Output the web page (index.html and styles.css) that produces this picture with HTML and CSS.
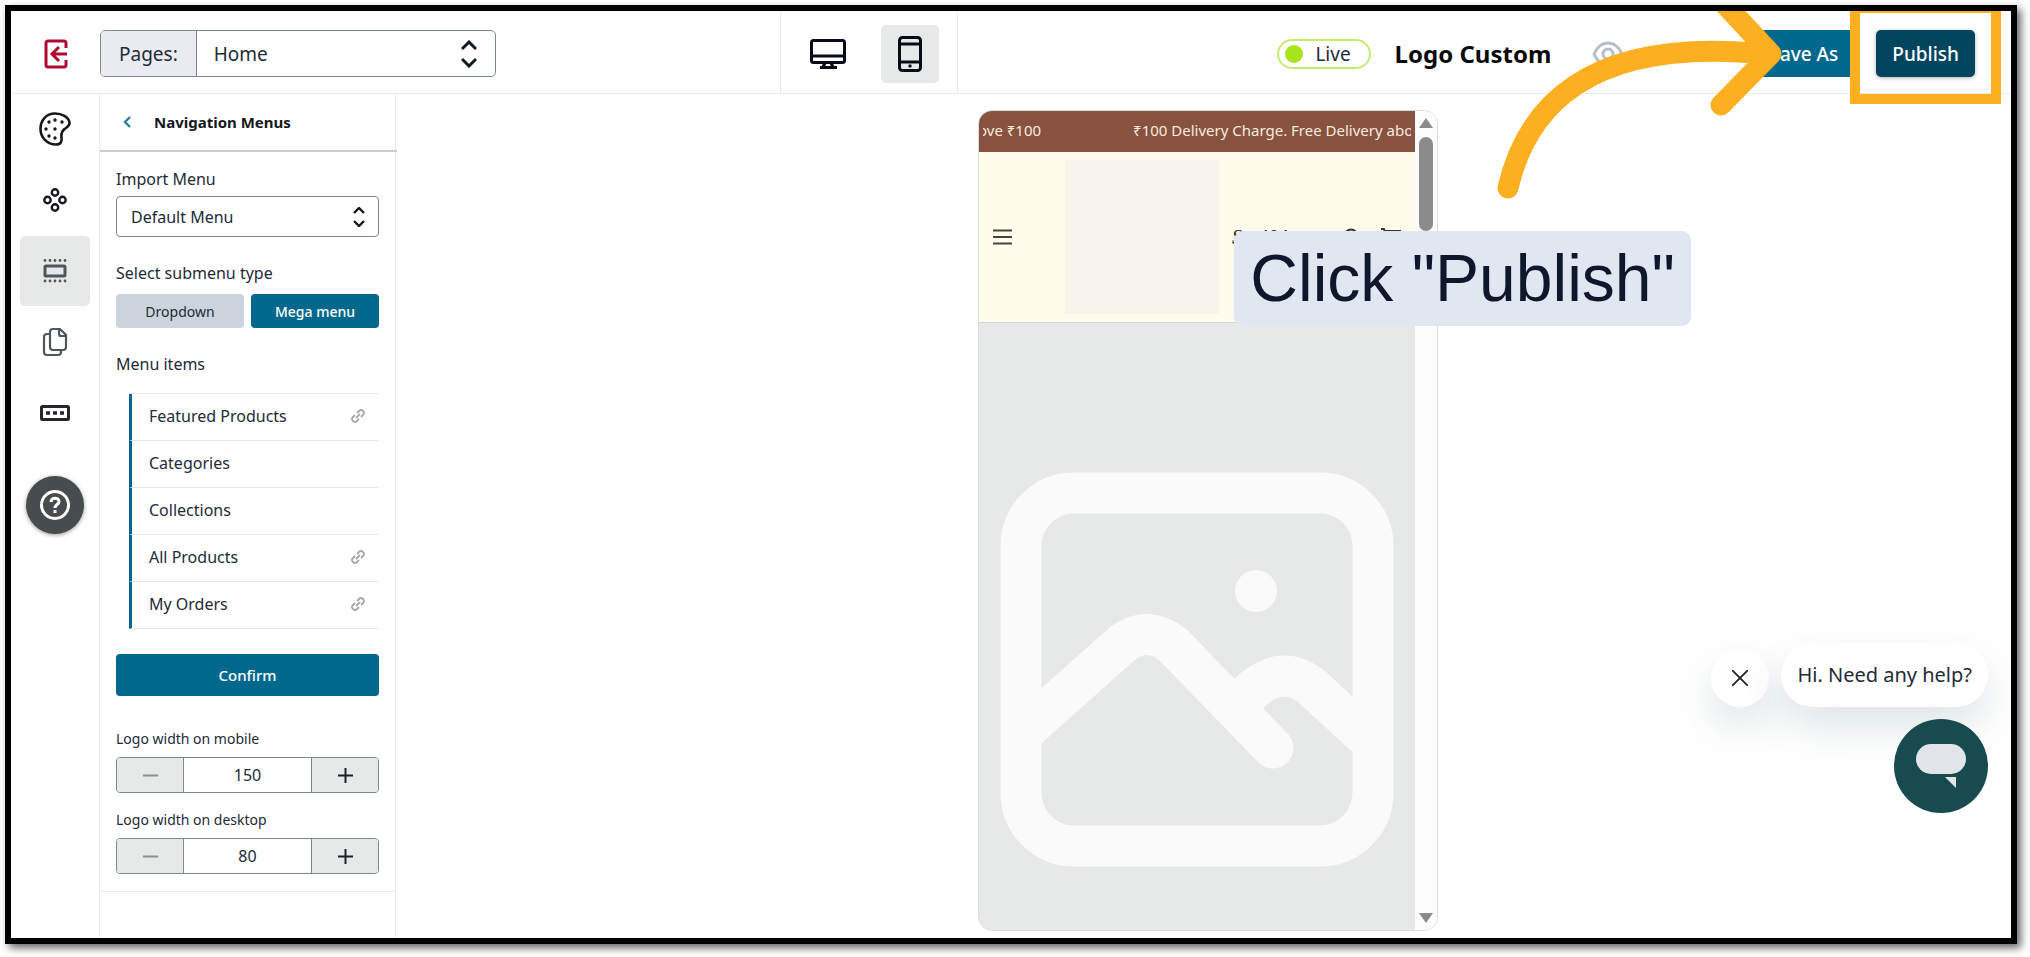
FILE: index.html
```
<!DOCTYPE html>
<html lang="en">
<head>
	<meta charset="utf-8">
	<title>Website Builder</title>
	<meta name="viewport" content="width=device-width, initial-scale=1">
	<link rel="stylesheet" href="styles.css">
</head>
<body>
	<div class="frame">
		<header class="topbar">
			<div class="topbar-left">
				<button class="exit" type="button" aria-label="Exit">
					<svg width="24" height="30" viewBox="0 0 24 30" fill="none" stroke="#b0082f" stroke-width="3"><path d="M22 9V4a2 2 0 0 0-2-2H4a2 2 0 0 0-2 2v22a2 2 0 0 0 2 2h16a2 2 0 0 0 2-2v-5M23 15H9M15 8l-7 7 7 7"/></svg>
				</button>
				<div class="pages">
					<label class="pages-label" for="page">Pages:</label>
					<div class="select-wrap">
						<select class="pages-select" id="page"><option>Home</option></select>
						<svg class="updown" width="16" height="28" viewBox="0 0 16 28" fill="none" stroke="#111820" stroke-width="3"><path d="M1 9l7-7 7 7M1 19l7 7 7-7"/></svg>
					</div>
				</div>
			</div>
			<div class="devices">
				<button class="device" type="button" aria-label="Desktop">
					<svg width="36" height="30" viewBox="0 0 36 30" fill="none" stroke="#080c18" stroke-width="3"><rect x="1.5" y="1.5" width="33" height="22" rx="2"/><path d="M2 17h32M15 24l-2 4M21 24l2 4M10 28.5h17"/></svg>
				</button>
				<button class="device active" type="button" aria-label="Mobile">
					<svg width="24" height="36" viewBox="0 0 24 36" fill="none" stroke="#080c18" stroke-width="3"><rect x="1.5" y="1.5" width="21" height="33" rx="3"/><path d="M2 8h20M2 26h20"/><circle cx="12" cy="30" r="1" stroke-width="1.5"/></svg>
				</button>
			</div>
			<div class="topbar-right">
				<span class="live"><span class="live-dot"></span>Live</span>
				<h1 class="theme-name">Logo Custom</h1>
				<button class="preview-btn" type="button">
					<svg width="32" height="26" viewBox="0 0 32 26" fill="none" stroke="#b6bec9" stroke-width="3"><path d="M2 13C5 6 10 2 16 2s11 4 14 11c-3 7-8 11-14 11S5 20 2 13z"/><circle cx="16" cy="13" r="5"/></svg>
					Preview
				</button>
				<button class="btn save" type="button">Save As</button>
				<button class="btn publish" type="button">Publish</button>
			</div>
		</header>

		<div class="workspace">
			<nav class="rail">
				<button class="rail-item" type="button" aria-label="Theme">
					<svg width="32" height="34" viewBox="0 0 32 34" fill="none" stroke="#16181b" stroke-width="2.6"><path d="M16 1.5C7 1.5 1.500 8.500 1.500 17S8 32.500 17 32.500c5 0 6-3 5.500-7-.5-4 0-6 3-8.500 3-2 5.500-3 5-6.500C29.500 5 23 1.500 16 1.500z"/><path stroke-width="3.4" stroke-linecap="round" d="M16 8h.01M23 10h.01M10 10h.01M7 17h.01M16 17h.01M10 24h.01M16 26h.01"/></svg>
				</button>
				<button class="rail-item" type="button" aria-label="Widgets">
					<svg width="24" height="24" viewBox="0 0 24 24" fill="none" stroke="#16181b" stroke-width="2.4"><circle cx="12" cy="4.500" r="3.2"/><circle cx="4.500" cy="12" r="3.2"/><circle cx="19.500" cy="12" r="3.2"/><circle cx="12" cy="19.500" r="3.2"/></svg>
				</button>
				<button class="rail-item active" type="button" aria-label="Sections">
					<svg width="24" height="24" viewBox="0 0 24 24" fill="none" stroke="#4f5858"><rect x="2" y="7" width="20" height="10" rx="1" stroke-width="3"/><path stroke-width="2.8" stroke-linecap="round" stroke-dasharray="0 5" d="M2 1.500h21M2 22h21"/></svg>
				</button>
				<button class="rail-item" type="button" aria-label="Pages">
					<svg width="26" height="30" viewBox="0 0 26 30" fill="none" stroke="#4f5858" stroke-width="2.2"><path d="M11 2h7l6 6v12a3 3 0 0 1-3 3H11a3 3 0 0 1-3-3V5a3 3 0 0 1 3-3zM17 2v5a2 2 0 0 0 2 2h5M8 7H5a3 3 0 0 0-3 3v15a3 3 0 0 0 3 3h11a3 3 0 0 0 3-3v-2"/></svg>
				</button>
				<button class="rail-item" type="button" aria-label="Footer">
					<svg width="30" height="16" viewBox="0 0 30 16" fill="none" stroke="#24282e"><rect x="1.500" y="1.500" width="27" height="13" rx="1" stroke-width="3"/><path stroke-width="3.5" d="M6 8h4M13 8h4M20 8h4"/></svg>
				</button>
				<button class="help" type="button" aria-label="Help">
					<svg width="30" height="30" viewBox="0 0 30 30" fill="none" stroke="#fff" stroke-width="3"><circle cx="15" cy="15" r="13.500"/><path d="M11 12c0-5 8-5 8-.5 0 3-4 3-4 6.500M15 20v3"/></svg>
				</button>
			</nav>

			<aside class="panel">
				<div class="panel-head">
					<button class="back" type="button" aria-label="Back">
						<svg width="8" height="12" viewBox="0 0 8 12" fill="none" stroke="#2a7f9c" stroke-width="2.4"><path d="M7 1L2 6l5 5"/></svg>
					</button>
					<h2 class="panel-title">Navigation Menus</h2>
				</div>
				<div class="panel-body">
					<label class="label" for="menu">Import Menu</label>
					<div class="select-wrap">
						<select class="menu-select" id="menu"><option>Default Menu</option></select>
						<svg class="updown" width="12" height="20" viewBox="0 0 12 20" fill="none" stroke="#16181b" stroke-width="2.4"><path d="M1 6l5-5 5 5M1 14l5 5 5-5"/></svg>
					</div>

					<h3 class="label">Select submenu type</h3>
					<div class="toggle">
						<button class="toggle-btn" type="button">Dropdown</button>
						<button class="toggle-btn selected" type="button">Mega menu</button>
					</div>

					<h3 class="label">Menu items</h3>
					<ul class="items">
						<li class="item">Featured Products <svg class="link-icon" viewBox="0 0 14 14"><use href="#link"/></svg></li>
						<li class="item">Categories</li>
						<li class="item">Collections</li>
						<li class="item">All Products <svg class="link-icon" viewBox="0 0 14 14"><use href="#link"/></svg></li>
						<li class="item">My Orders <svg class="link-icon" viewBox="0 0 14 14"><use href="#link"/></svg></li>
					</ul>

					<button class="confirm" type="button">Confirm</button>

					<label class="small-label" for="mobile-width">Logo width on mobile</label>
					<div class="stepper">
						<button class="step minus" type="button" aria-label="Decrease"><svg width="15" height="15" viewBox="0 0 15 15"><path d="M0 7.500h15"/></svg></button>
						<input class="step-value" id="mobile-width" type="text" value="150">
						<button class="step plus" type="button" aria-label="Increase"><svg width="15" height="15" viewBox="0 0 15 15"><path d="M0 7.500h15M7.500 0v15"/></svg></button>
					</div>
					<label class="small-label" for="desktop-width">Logo width on desktop</label>
					<div class="stepper">
						<button class="step minus" type="button" aria-label="Decrease"><svg width="15" height="15" viewBox="0 0 15 15"><path d="M0 7.500h15"/></svg></button>
						<input class="step-value" id="desktop-width" type="text" value="80">
						<button class="step plus" type="button" aria-label="Increase"><svg width="15" height="15" viewBox="0 0 15 15"><path d="M0 7.500h15M7.500 0v15"/></svg></button>
					</div>
				</div>
			</aside>

			<main class="canvas">
				<div class="phone">
					<div class="screen">
						<div class="ticker">
							<div class="ticker-track"><span>ove ₹100</span><span>₹100 Delivery Charge. Free Delivery above</span></div>
						</div>
						<div class="store-head">
							<svg width="19" height="16" viewBox="0 0 19 16" stroke="#444" stroke-width="2"><path d="M0 1.500h19M0 8h19M0 14.500h19"/></svg>
							<div class="store-logo"></div>
							<span class="store-name">Sto404</span>
							<div class="store-icons">
								<svg width="18" height="18" viewBox="0 0 18 18" fill="none" stroke="#333" stroke-width="1.8"><circle cx="8" cy="8" r="6.500"/><path d="M13 13l4 4"/></svg>
								<svg width="20" height="18" viewBox="0 0 20 18" fill="none" stroke="#333" stroke-width="1.8"><path d="M0 1h3l3 11h10l3-9H4"/><circle cx="7" cy="16" r="1"/><circle cx="15" cy="16" r="1"/></svg>
							</div>
						</div>
						<div class="hero">
							<svg class="hero-image" viewBox="0 0 436 609" fill="none" stroke="#fafafa" stroke-width="41" stroke-linecap="round">
								<rect x="42" y="170" width="352" height="353" rx="53"/>
								<path d="M50 404L144 320Q169 302 194 322L294 425M268 372Q302 338 334 365L384 411"/>
								<circle cx="277" cy="268" r="21" fill="#fafafa" stroke="none"/>
							</svg>
						</div>
					</div>
					<div class="scrollbar">
						<span class="arrow-up"></span>
						<span class="thumb"></span>
						<span class="arrow-down"></span>
					</div>
				</div>
			</main>
		</div>

		<!-- Chat widget -->
		<div class="chat">
			<div class="chat-row">
				<button class="chat-close" type="button" aria-label="Close"><svg width="16" height="16" viewBox="0 0 16 16" stroke="#222" stroke-width="1.8"><path d="M0 0l16 16M16 0L0 16"/></svg></button>
				<p class="chat-text">Hi. Need any help?</p>
			</div>
			<button class="chat-open" type="button" aria-label="Open chat">
				<svg width="50" height="44" viewBox="0 0 50 44" fill="#e1e5ea"><rect width="50" height="30" rx="15"/><path d="M29 33h11v11z"/></svg>
			</button>
		</div>

		<!-- Walkthrough marks -->
		<svg class="guide-arrow" width="290" height="200" viewBox="1495 11 290 200" fill="none" stroke="#fcaf20" stroke-width="21" stroke-linecap="round" stroke-linejoin="round"><path d="M1508 188C1526 110 1585 36 1765 54M1721 0L1771 54L1721 105"/></svg>
		<div class="guide-box"></div>
		<div class="guide-text">Click "Publish"</div>
	</div>

	<svg class="defs" width="0" height="0">
		<symbol id="link" viewBox="0 0 14 14"><path fill="none" stroke="#a3a9ad" stroke-width="1.8" d="M5 9l4-4M6 4l2-2a2.800 2.800 0 0 1 4 4l-2 2M8 10l-2 2a2.800 2.800 0 0 1-4-4l2-2"/></symbol>
	</svg>
</body>
</html>
```
FILE: styles.css
```
/* Reset */
*,
*::after,
*::before {
	margin: 0;
	padding: 0;
	box-sizing: border-box;
}

/* Base */
body {
	font-family: "Noto Sans", sans-serif;
	font-size: 16px;
	color: #232b37;
	background: #fff;
	height: 100vh;
	padding: 5px 13px 13px 5px;
}
button,
input,
select {
	font: inherit;
	color: inherit;
	border: none;
	background: none;
}
svg {
	display: block;
	flex: none;
}
.defs {
	position: absolute;
}
.frame {
	position: relative;
	display: flex;
	flex-direction: column;
	height: 100%;
	border: 6px solid #000;
	background: #fff;
	box-shadow: 4px 4px 8px rgba(0, 0, 0, 0.6);
	overflow: hidden;
}

/* Top bar */
.topbar {
	display: grid;
	grid-template-columns: 769fr 178px 1053fr;
	height: 83px;
	flex: none;
	border-bottom: 1px solid #e9ebf0;
}
.topbar-left,
.topbar-right,
.devices {
	display: flex;
	align-items: center;
	padding-top: 3px;
}
.exit {
	width: 89px;
	display: flex;
	justify-content: center;
}
.pages {
	display: flex;
	width: 396px;
	height: 47px;
	border: 1px solid #7d8793;
	border-radius: 5px;
	font-size: 19px;
	overflow: hidden;
}
.pages-label {
	display: flex;
	align-items: center;
	padding: 0 18px;
	background: #e9ebf0;
	border-right: 1px solid #7d8793;
}
.select-wrap {
	position: relative;
	flex: 1;
	display: flex;
}
.select-wrap select {
	appearance: none;
	width: 100%;
}
.pages-select {
	padding: 0 17px;
}
.updown {
	position: absolute;
	right: 18px;
	top: 50%;
	transform: translateY(-50%);
	pointer-events: none;
}
.devices {
	border-left: 1px solid #e9ebf0;
	border-right: 1px solid #e9ebf0;
	justify-content: center;
	gap: 24px;
}
.device {
	width: 58px;
	height: 58px;
	border-radius: 5px;
	display: flex;
	align-items: center;
	justify-content: center;
}
.device.active,
.rail-item.active {
	background: #e7e9e8;
}
.topbar-right {
	justify-content: flex-end;
	padding-right: 36px;
}
.live {
	display: flex;
	align-items: center;
	gap: 12px;
	height: 30px;
	padding: 0 18px 0 6px;
	border: 2px solid #c4ec6c;
	border-radius: 15px;
	font-size: 19px;
}
.live-dot {
	width: 18px;
	height: 18px;
	border-radius: 50%;
	background: #a9e31c;
}
.theme-name {
	font-size: 24px;
	color: #0a0a0c;
	margin: 0 41px 0 24px;
}
.preview-btn {
	display: flex;
	align-items: center;
	gap: 18px;
	margin-right: 42px;
	font-size: 19px;
	color: #b6bec9;
}
.btn {
	height: 47px;
	padding: 0 16px;
	border-radius: 5px;
	font-size: 19px;
	font-weight: 500;
	color: #fff;
}
.save {
	background: #00688d;
	margin-right: 22px;
}
.publish {
	background: #00445e;
	box-shadow: 0 1px 4px rgba(0, 0, 0, 0.3);
}

/* Left rail */
.workspace {
	display: flex;
	flex: 1;
	min-height: 0;
}
.rail {
	display: flex;
	flex-direction: column;
	align-items: center;
	gap: 1px;
	width: 89px;
	border-right: 1px solid #e9ebf0;
}
.rail-item {
	width: 70px;
	height: 70px;
	border-radius: 5px;
	display: flex;
	align-items: center;
	justify-content: center;
}
.help {
	width: 58px;
	height: 58px;
	margin-top: 27px;
	border-radius: 50%;
	background: #464d4c;
	box-shadow: 0 1px 4px rgba(0, 0, 0, 0.4);
	display: flex;
	align-items: center;
	justify-content: center;
}

/* Panel */
.panel {
	width: 296px;
	border-right: 1px solid #e9ebf0;
}
.panel-head {
	display: flex;
	align-items: center;
	width: 297px;
	height: 58px;
	padding-left: 23px;
	gap: 23px;
	border-bottom: 2px solid #c8ced7;
}
.panel-title {
	font-size: 15px;
	color: #16181d;
}
.panel-body {
	display: flex;
	flex-direction: column;
	padding: 16px 16px 17px;
	border-bottom: 1px solid #e9ebf0;
}
.label {
	font-size: 16px;
	font-weight: 400;
	line-height: 22px;
	margin-bottom: 6px;
}
.panel-body .select-wrap {
	flex: none;
	margin-bottom: 25px;
}
.menu-select {
	height: 41px;
	padding: 0 14px;
	border: 1px solid #7d8793;
	border-radius: 4px;
}
.menu-select + .updown {
	right: 14px;
}
.toggle {
	display: flex;
	gap: 7px;
	margin: 4px 0 25px;
}
.toggle-btn {
	flex: 1;
	height: 34px;
	border-radius: 4px;
	background: #ccd4de;
	font-size: 14px;
}
.toggle-btn.selected,
.confirm {
	background: #00688d;
	color: #fff;
	font-weight: 500;
}
.items {
	list-style: none;
	margin: 12px 0 25px 13px;
	border-top: 1px solid #e7e8ea;
}
.item {
	display: flex;
	align-items: center;
	justify-content: space-between;
	height: 47px;
	padding: 0 14px 2px 17px;
	border-bottom: 1px solid #e7e8ea;
	border-left: 3px solid #00688d;
}
.link-icon {
	width: 14px;
	height: 14px;
}
.confirm {
	height: 42px;
	border-radius: 4px;
	margin-bottom: 33px;
	font-size: 15px;
}
.small-label {
	font-size: 14px;
	line-height: 20px;
	margin-bottom: 8px;
}
.stepper {
	display: flex;
	height: 36px;
	border: 1px solid #7d8a8a;
	border-radius: 4px;
	overflow: hidden;
}
.stepper + .small-label {
	margin-top: 17px;
}
.step {
	width: 66px;
	background: #e7e9e8;
	display: flex;
	align-items: center;
	justify-content: center;
	stroke: #1b202c;
	stroke-width: 2;
}
.minus {
	stroke: #8b9094;
}
.step-value {
	flex: 1;
	min-width: 0;
	text-align: center;
	border: solid #7d8a8a;
	border-width: 0 1px;
}

/* Phone preview */
.canvas {
	flex: 1;
	display: flex;
	justify-content: center;
	padding: 16px 0 7px 9px;
}
.phone {
	display: flex;
	width: 460px;
	border: 1px solid #dcdfe0;
	border-radius: 14px;
	overflow: hidden;
}
.screen {
	display: flex;
	flex-direction: column;
	flex: 1;
	min-width: 0;
}
.ticker {
	height: 41px;
	flex: none;
	padding: 8px 4px;
	background: #87523f;
	color: #f7ecdf;
	font-size: 15px;
	line-height: 22px;
	white-space: nowrap;
}
.ticker-track {
	display: flex;
	gap: 92px;
	overflow: hidden;
}
.ticker-track span:first-child {
	margin-left: -5px;
}
.store-head {
	display: flex;
	align-items: center;
	height: 171px;
	flex: none;
	padding: 0 14px;
	background: #fffceb;
	border-bottom: 1px solid #d3d6d6;
}
.store-logo {
	width: 154px;
	height: 154px;
	margin: 0 13px 0 53px;
	background: #f8f4ec;
}
.store-name {
	font: italic 20px "Liberation Serif", serif;
	color: #222;
}
.store-icons {
	display: flex;
	gap: 20px;
	margin-left: auto;
}
.hero {
	flex: 1;
	min-height: 0;
	background: #e7e9e8;
}
.hero-image {
	width: 100%;
}
.scrollbar {
	display: flex;
	flex-direction: column;
	align-items: center;
	width: 22px;
	padding: 7px 0;
	background: #fcfcfc;
}
.arrow-up,
.arrow-down {
	border: solid transparent;
	border-width: 0 7px;
}
.arrow-up {
	border-bottom: 10px solid #8b8b8b;
}
.arrow-down {
	border-top: 10px solid #8b8b8b;
	margin-top: auto;
}
.thumb {
	width: 14px;
	height: 94px;
	margin-top: 9px;
	border-radius: 7px;
	background: #8b8b8b;
}

/* Chat */
.chat {
	position: absolute;
	right: 23px;
	bottom: 125px;
	display: flex;
	flex-direction: column;
	align-items: flex-end;
	gap: 12px;
}
.chat-row {
	display: flex;
	align-items: flex-end;
	gap: 12px;
}
.chat-close,
.chat-text {
	background: #fff;
	box-shadow: 0 20px 40px rgba(22, 74, 76, 0.14);
}
.chat-close {
	width: 58px;
	height: 58px;
	border-radius: 50%;
	display: flex;
	align-items: center;
	justify-content: center;
}
.chat-text {
	padding: 20px 16px;
	border-radius: 32px;
	font-size: 20px;
	line-height: 24px;
}
.chat-open {
	position: relative;
	width: 94px;
	height: 94px;
	border-radius: 50%;
	background: #184b4f;
	display: flex;
	align-items: center;
	justify-content: center;
}

/* Guide */
.guide-arrow {
	position: absolute;
	top: 0;
	right: 226px;
}
.guide-box {
	position: absolute;
	top: -8px;
	right: 10px;
	width: 151px;
	height: 101px;
	border: 10px solid #fcaf20;
}
.guide-text {
	position: absolute;
	top: 220px;
	right: 320px;
	padding: 10px 16px;
	border-radius: 9px;
	background: #e1e7f0;
	color: #0e172b;
	font: 66px/75px "Liberation Sans", sans-serif;
}
```
